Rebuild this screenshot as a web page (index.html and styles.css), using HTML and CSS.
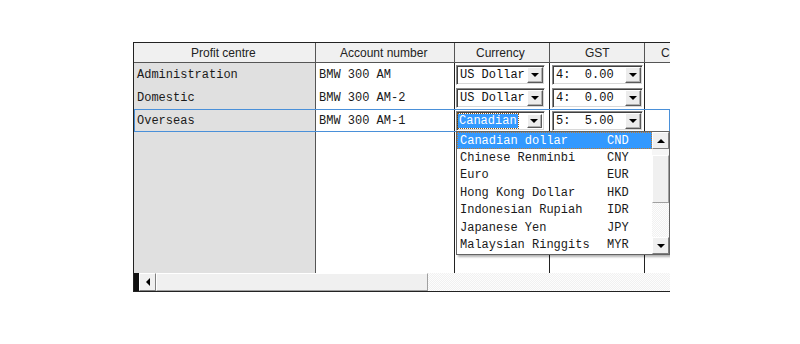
FILE: index.html
```html
<!DOCTYPE html>
<html lang="en">
<head>
<meta charset="UTF-8" />
<title>Profit centres</title>
<link rel="stylesheet" href="styles.css">
</head>
<body>

<div class="grid">
    <!-- HEADER -->
    <div class="row head">
        <div class="cell c1">Profit centre</div>
        <div class="cell c2">Account number</div>
        <div class="cell c3">Currency</div>
        <div class="cell c4">GST</div>
        <div class="cell c5">Comment</div>
    </div>

    <!-- ROWS -->
    <div class="body">
        <div class="row">
            <div class="cell c1">Administration</div>
            <div class="cell c2">BMW 300 AM</div>
            <div class="cell c3"><span class="combo cur"><span class="val">US Dollar</span><span class="btn"></span></span></div>
            <div class="cell c4"><span class="combo gst"><span class="val">4:  0.00</span><span class="btn"></span></span></div>
            <div class="cell c5"></div>
        </div>
        <div class="row">
            <div class="cell c1">Domestic</div>
            <div class="cell c2">BMW 300 AM-2</div>
            <div class="cell c3"><span class="combo cur"><span class="val">US Dollar</span><span class="btn"></span></span></div>
            <div class="cell c4"><span class="combo gst"><span class="val">4:  0.00</span><span class="btn"></span></span></div>
            <div class="cell c5"></div>
        </div>
        <div class="row current">
            <div class="cell c1">Overseas</div>
            <div class="cell c2">BMW 300 AM-1</div>
            <div class="cell c3"><span class="combo cur open"><span class="val"><span class="sel">Canadian</span></span><span class="btn small"></span></span></div>
            <div class="cell c4"><span class="combo gst"><span class="val">5:  5.00</span><span class="btn"></span></span></div>
            <div class="cell c5"></div>
        </div>
        <div class="row fill">
            <div class="cell c1"></div>
            <div class="cell c2"></div>
            <div class="cell c3"></div>
            <div class="cell c4"></div>
            <div class="cell c5"></div>
        </div>
    </div>

    <!-- HORIZONTAL SCROLLBAR -->
    <div class="hscroll">
        <div class="hs-stub"></div>
        <div class="hs-btn"><span class="arr-left"></span></div>
        <div class="hs-thumb"></div>
        <div class="hs-track"></div>
    </div>

    <!-- OPEN CURRENCY LIST -->
    <div class="droplist">
        <div class="items">
            <div class="item active"><span class="name">Canadian dollar</span>CND</div>
            <div class="item"><span class="name">Chinese Renminbi</span>CNY</div>
            <div class="item"><span class="name">Euro</span>EUR</div>
            <div class="item"><span class="name">Hong Kong Dollar</span>HKD</div>
            <div class="item"><span class="name">Indonesian Rupiah</span>IDR</div>
            <div class="item"><span class="name">Japanese Yen</span>JPY</div>
            <div class="item"><span class="name">Malaysian Ringgits</span>MYR</div>
        </div>
        <div class="vscroll">
            <div class="vs-btn"><span class="arr-up"></span></div>
            <div class="vs-gap"></div>
            <div class="vs-thumb"></div>
            <div class="vs-track"></div>
            <div class="vs-btn"><span class="arr-down"></span></div>
        </div>
    </div>
</div>

</body>
</html>
```

FILE: styles.css
```css
* { margin: 0; padding: 0; box-sizing: border-box; }

body {
    background: #fff;
    color: #1a1a1a;
    font-family: 'Liberation Mono', 'Courier New', monospace;
    font-size: 12px;
}

.grid {
    position: relative;
    width: 537px;
    height: 250px;
    margin: 42px 0 0 133px;
    border-top: 1px solid #222;
    border-left: 1px solid #222;
    overflow: hidden;
    display: flex;
    flex-direction: column;
}

.row {
    display: flex;
    flex: none;
    height: 23px;
}

.cell {
    flex: none;
    height: 100%;
    border-right: 1px solid #222;
    white-space: pre;
    display: flex;
    align-items: center;
    padding-left: 3px;
    overflow: hidden;
}

.c1 { width: 182px; background: #e0e0e0; border-right-color: #555; }
.c2 { width: 139px; }
.c3 { width: 95px; padding-left: 1px; }
.c4 { width: 95px; padding-left: 1px; }
.c5 { width: 60px; }

/* header */
.head {
    height: 20px;
    background: #f0f0f0;
    border-bottom: 1px solid #555;
}

.head .cell {
    justify-content: flex-start;
    padding: 0;
    font-family: 'Liberation Sans', Arial, sans-serif;
    font-size: 12px;
    color: #222;
    background: #f0f0f0;
    border-right-color: #555;
}

.head .c1 { padding-left: 57px; }
.head .c2 { padding-left: 24px; }
.head .c3 { padding-left: 21px; }
.head .c4 { padding-left: 35px; }
.head .c5 { padding-left: 16px; }

.body {
    flex: 1;
    display: flex;
    flex-direction: column;
}

.current {
    outline: 1px solid #4a90d9;
    outline-offset: -1px;
}

.fill { flex: 1; height: auto; }

/* combo boxes */
.combo {
    display: flex;
    align-items: center;
    height: 20px;
    background: #fff;
    border: 1px solid;
    border-color: #8a8a8a #fff #fff #8a8a8a;
    box-shadow: inset 1px 1px 0 #404040, inset -1px -1px 0 #d8d8d8;
    padding: 1px 1px 1px 3px;
}

.cur { width: 89px; }
.gst { width: 91px; margin-left: 1px; }

.combo .val {
    flex: 1;
    display: flex;
    align-items: center;
    white-space: pre;
    color: #111;
}

.combo .sel {
    background: #3399ff;
    color: #fff;
    padding: 0 1px;
    margin-left: -2px;
    outline: 1px dotted #8a5a20;
}

.btn {
    position: relative;
    flex: none;
    width: 16px;
    height: 16px;
    background: #ececec;
    border: 1px solid;
    border-color: #fff #5a5a5a #5a5a5a #fff;
    box-shadow: inset -1px -1px 0 #b0b0b0;
}

.btn.small {
    width: 15px;
    height: 14px;
    margin-right: 1px;
}

.btn::after {
    content: "";
    position: absolute;
    left: 3px;
    top: 5px;
    border-left: 4px solid transparent;
    border-right: 4px solid transparent;
    border-top: 4px solid #000;
}

.btn.small::after { left: 2px; top: 4px; }

/* horizontal scrollbar */
.hscroll {
    flex: none;
    height: 19px;
    display: flex;
    border-bottom: 1px solid #222;
    background: #fff;
}

.hs-stub { width: 5px; background: #111; }

.hs-btn, .vs-btn {
    display: flex;
    align-items: center;
    justify-content: center;
    background: #f0f0f0;
    border: 1px solid;
    border-color: #fff #808080 #808080 #fff;
}

.hs-btn { width: 17px; }

.hs-thumb {
    width: 272px;
    background: #f0f0f0;
    border: 1px solid;
    border-color: #fff #a0a0a0 #a0a0a0 #fff;
}

.hs-track, .vs-track {
    flex: 1;
    background: repeating-conic-gradient(#fdfdfd 0 25%, #f1f1f1 0 50%) 0 0 / 2px 2px;
}

.arr-left {
    border-top: 4px solid transparent;
    border-bottom: 4px solid transparent;
    border-right: 4px solid #000;
}

.arr-up {
    border-left: 4px solid transparent;
    border-right: 4px solid transparent;
    border-bottom: 4px solid #000;
}

.arr-down {
    border-left: 4px solid transparent;
    border-right: 4px solid transparent;
    border-top: 4px solid #000;
}

/* dropdown list */
.droplist {
    position: absolute;
    left: 322px;
    top: 88px;
    width: 214px;
    height: 124px;
    display: flex;
    background: #fff;
    border: 1px solid #646464;
    box-shadow: 2px 2px 2px rgba(0, 0, 0, 0.3);
}

.items { flex: 1; }

.item {
    height: 17.4px;
    display: flex;
    align-items: center;
    padding-left: 3px;
    white-space: pre;
}

.item .name { display: inline-block; width: 147px; }

.item.active {
    background: #3399ff;
    color: #fff;
    outline: 1px dotted #c07a30;
    outline-offset: -1px;
}

.vscroll {
    width: 17px;
    display: flex;
    flex-direction: column;
    background: #f6f6f6;
}

.vs-btn { height: 17px; }
.vs-gap { height: 6px; background: #f6f6f6; }

.vs-thumb {
    height: 48px;
    background: #f0f0f0;
    border: 1px solid;
    border-color: #fff #a0a0a0 #a0a0a0 #fff;
}
```
